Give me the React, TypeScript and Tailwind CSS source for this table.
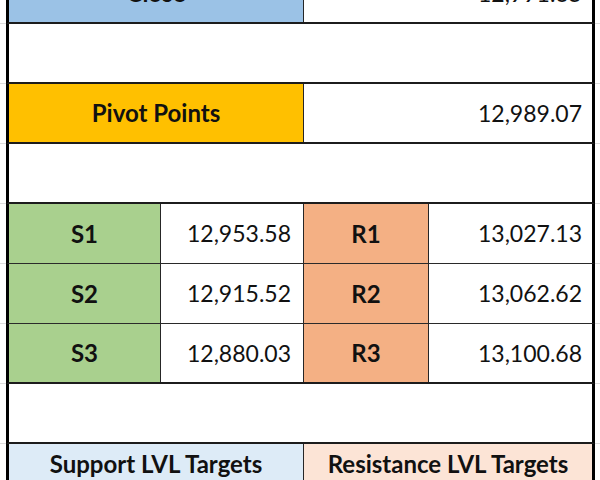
import React from 'react'

/*******************************************************
 * Pivot point sheet
 *******************************************************/

const SUPPORT_RESISTANCE = [
  { s: 'S1', sValue: '12,953.58', r: 'R1', rValue: '13,027.13' },
  { s: 'S2', sValue: '12,915.52', r: 'R2', rValue: '13,062.62' },
  { s: 'S3', sValue: '12,880.03', r: 'R3', rValue: '13,100.68' }
]

// One spreadsheet row: grey gridline in the gutters, thick black frame at the sides
function Row (props: { children?: React.ReactNode, className?: string, bottom?: string }) {
  const { children, className = 'h-[60px]', bottom = 'border-b-2 border-[#1c1c1c]' } = props
  return (
    <div className={'flex ' + className}>
      <div className="w-[6px] shrink-0 border-b border-[#dcdcdc]" />
      <div className={'flex flex-1 border-x-[3px] border-x-black ' + bottom}>
        {children}
      </div>
      <div className="w-[5px] shrink-0 border-b border-[#dcdcdc]" />
    </div>
  )
}

function Label (props: { text: string, bg: string, width: string }) {
  const { text, bg, width } = props
  return (
    <div className={'flex shrink-0 items-center justify-center border-r border-[#262626] text-[24px] font-bold ' + bg + ' ' + width}>
      {text}
    </div>
  )
}

function Value (props: { text: string, width?: string }) {
  const { text, width = 'flex-1' } = props
  return (
    <div className={'flex shrink-0 items-center justify-end bg-white pr-[10px] ' + width}>
      {text}
    </div>
  )
}

export default function App () {
  return (
    <div
      className="h-[480px] w-[600px] overflow-hidden bg-white text-[23px] text-[#111]"
      style={{ fontFamily: 'Lato, "Open Sans", sans-serif' }}
    >
      <div className="-mt-[36px]">
        <Row>
          <Label text="Close" bg="bg-[#9bc2e6]" width="w-[295px]" />
          <Value text="12,991.65" />
        </Row>
        <Row />
        <Row>
          <Label text="Pivot Points" bg="bg-[#ffc000]" width="w-[295px]" />
          <Value text="12,989.07" />
        </Row>
        <Row />
        {SUPPORT_RESISTANCE.map(({ s, sValue, r, rValue }, i) => (
          <Row
            key={s}
            bottom={i === 2 ? 'border-b-2 border-[#1c1c1c]' : 'border-b border-[#2a2a2a]'}
          >
            <Label text={s} bg="bg-[#a9d08e]" width="w-[152px]" />
            <div className="flex w-[143px] shrink-0 items-center justify-end border-r border-[#262626] bg-white pr-[12px]">
              {sValue}
            </div>
            <Label text={r} bg="bg-[#f4b084]" width="w-[125px]" />
            <Value text={rValue} />
          </Row>
        ))}
        <Row />
        <Row className="h-[40px]" bottom="">
          <Label text="Support LVL Targets" bg="bg-[#ddebf7]" width="w-[295px]" />
          <div className="flex flex-1 items-center justify-center bg-[#fce4d6] text-[24px] font-bold">
            Resistance LVL Targets
          </div>
        </Row>
      </div>
    </div>
  )
}
